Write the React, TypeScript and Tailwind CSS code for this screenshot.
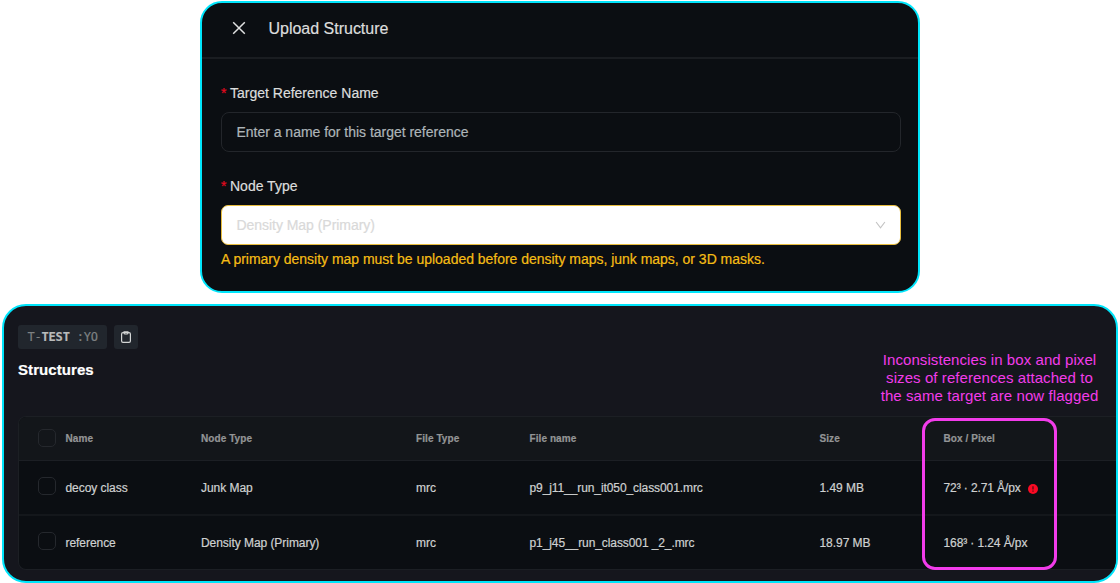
import type { ReactNode } from "react";

const columns = "grid grid-cols-[46.5px_135.5px_215px_113.5px_290px_124px_1fr] items-center";

const rows = [
  { name: "decoy class", type: "Junk Map", fileType: "mrc", file: "p9_j11__run_it050_class001.mrc", size: "1.49 MB", box: "72³ · 2.71 Å/px", flagged: true },
  { name: "reference", type: "Density Map (Primary)", fileType: "mrc", file: "p1_j45__run_class001 _2_.mrc", size: "18.97 MB", box: "168³ · 1.24 Å/px", flagged: false },
];

function Checkbox() {
  return <span className="mb-[4px] ml-[19px] block h-[18px] w-[18px] rounded-[5px] border border-[#25282d]" />;
}

function Label({ children }: { children: ReactNode }) {
  return (
    <div className="flex h-5 items-center text-sm text-[#dcdddd]">
      <span className="w-[9px] text-[#e5091f]">*</span>
      {children}
    </div>
  );
}

function UploadPanel() {
  return (
    <section className="mx-auto h-[292px] w-[720px] shrink-0 overflow-hidden rounded-[22px] border-2 border-[#00e5fb] bg-[#0b0e12]">
      <header className="flex h-[56px] items-center border-b-2 border-[#1a1d21] pb-[4px] pl-[29.5px]">
        <svg className="h-[14px] w-[14px]" viewBox="0 0 14 14" fill="none" stroke="#e0e1e1" strokeWidth="1.5">
          <path d="M1.2 1.2 12.8 12.8M12.8 1.2 1.2 12.8" />
        </svg>
        <h1 className="ml-[23px] pt-px text-base tracking-[-0.01px] text-[#dcdddd]">Upload Structure</h1>
      </header>
      <div className="pt-[24px] pr-[17px] pl-[19px]">
        <Label>Target Reference Name</Label>
        <div className="mt-[9px] flex h-[40px] items-center rounded-lg border border-[#23262b] px-[14.5px] pb-px text-sm tracking-[-0.02px] text-[#adb5b9]">
          Enter a name for this target reference
        </div>
        <div className="mt-[24px]">
          <Label>Node Type</Label>
        </div>
        <div className="mt-[9px] flex h-[40px] items-center justify-between rounded-[7px] border border-[#e8bd3e] bg-white px-[14.5px] pb-px text-sm tracking-[-0.04px] text-[#d9d9d9]">
          Density Map (Primary)
          <svg className="h-2 w-[11px]" viewBox="0 0 12 8" fill="none" stroke="#c3c3c3" strokeWidth="1.2">
            <path d="M1.2.7 6 7.1 10.8.7" />
          </svg>
        </div>
        <p className="mt-[4px] text-sm leading-5 tracking-[-0.02px] text-[#f5bd15]">
          A primary density map must be uploaded before density maps, junk maps, or 3D masks.
        </p>
      </div>
    </section>
  );
}

function StructuresPanel() {
  return (
    <section className="relative mx-[2px] mt-[11px] flex h-[279px] shrink-0 flex-col overflow-hidden rounded-[24px] border-2 border-[#00e5fb] bg-[#15161d] pl-[14px]">
      <div className="mt-[19px] flex h-6 gap-[7px]">
        <div className="flex w-[89px] items-center rounded-[3px] bg-[#21262d] pl-[9.5px] font-['DejaVu_Sans_Mono',monospace] text-[12px] tracking-[-0.2px] whitespace-pre text-[#7e8182]">
          T-<span className="font-bold text-[#b9bbbb]">TEST</span> :YO
        </div>
        <div className="flex w-6 items-center justify-center rounded-[3px] bg-[#21262d]">
          <svg className="h-3 w-[10px]" viewBox="0 0 10 12" fill="none" stroke="#d3d5d5" strokeWidth="1.2">
            <rect x=".6" y="1.6" width="8.8" height="9.8" rx="1.4" />
            <path d="M3.1.8v1.3c0 .6.3.9.9.9h2c.6 0 .9-.3.9-.9V.8z" />
          </svg>
        </div>
      </div>
      <h2 className="mt-[11px] text-[15px] leading-5 font-bold tracking-[0.07px] text-white">Structures</h2>

      <div className="mt-[36px] h-[154px] shrink-0 overflow-hidden rounded-l-lg border border-r-0 border-[#1c1f24] bg-[#0b0e12] text-xs text-[#cfd1d1]">
        <div className={`${columns} h-[44px] border-b border-[#1c1f24] bg-[#13161a] text-[10px] font-bold tracking-[0.08px] text-[#939596]`}>
          <span className="pt-[3px]"><Checkbox /></span>
          <span>Name</span>
          <span>Node Type</span>
          <span>File Type</span>
          <span>File name</span>
          <span>Size</span>
          <span>Box / Pixel</span>
        </div>
        {rows.map((row) => (
          <div key={row.name} className={`${columns} h-[55px] border-b-2 border-[#14171b] tracking-[-0.05px] last:h-[53px] last:border-b-0`}>
            <Checkbox />
            <span>{row.name}</span>
            <span>{row.type}</span>
            <span>{row.fileType}</span>
            <span className="tracking-[-0.09px]">{row.file}</span>
            <span>{row.size}</span>
            <span className="flex items-center tracking-[-0.1px]">
              {row.box}
              {row.flagged && (
                <svg className="mt-[2px] ml-[7px] h-[10px] w-[10px]" viewBox="0 0 10 10">
                  <circle cx="5" cy="5" r="5" fill="#fb0a24" />
                  <path d="M5 2.2v3.2M5 6.4v1.3" stroke="#4c0910" strokeWidth="1.2" />
                </svg>
              )}
            </span>
          </div>
        ))}
      </div>

      <p className="absolute top-[45px] right-[11.5px] w-[230px] text-center text-[15px] leading-[18px] tracking-[0.08px] text-[#f23cea] [-webkit-text-stroke:0px]">
        Inconsistencies in box and pixel
        <br />
        sizes of references attached to
        <br />
        the same target are now flagged
      </p>
      <div className="absolute top-[112px] left-[918px] h-[152px] w-[135px] rounded-[13px] border-3 border-[#f23cea]" />
    </section>
  );
}

export default function App() {
  return (
    <main className="flex h-[583px] w-[1120px] flex-col overflow-hidden bg-white pt-px font-['Liberation_Sans',Arial,sans-serif] [-webkit-text-stroke:0.2px]">
      <UploadPanel />
      <StructuresPanel />
    </main>
  );
}
